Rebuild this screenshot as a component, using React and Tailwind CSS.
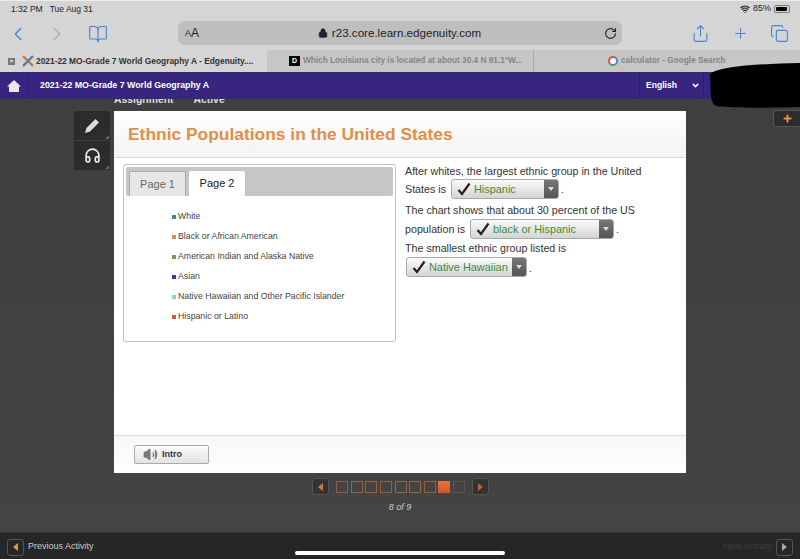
import React from "react";
import { Lock, RotateCw, Plus, ChevronLeft, ChevronRight, ChevronDown, BookOpen, Share, Copy, Wifi, Headphones, Volume2 } from "lucide-react";

const legend = [
  ["White", "bg-[#4c7f95]"],
  ["Black or African American", "bg-[#d98a45]"],
  ["American Indian and Alaska Native", "bg-[#7f9a57]"],
  ["Asian", "bg-[#5b2d8e]"],
  ["Native Hawaiian and Other Pacific Islander", "bg-[#8fd0cf]"],
  ["Hispanic or Latino", "bg-[#d9534f]"],
];

function Drop({ label, w }) {
  return (
    <span className={`inline-flex h-[20px] ${w} items-center rounded-[3px] border border-[#a9a9a9] bg-gradient-to-b from-[#fbfbfb] to-[#d4d4d4] overflow-hidden shrink-0`}>
      <svg width="14" height="14" viewBox="0 0 14 14" className="ml-[5px] shrink-0">
        <path d="M1.5 8 L5 12 L12.5 1.5" fill="none" stroke="#222" strokeWidth="2.2" />
      </svg>
      <span className="ml-[3px] text-[10.9px] leading-none text-[#3f8a37] flex-1 whitespace-nowrap">{label}</span>
      <span className="w-[14px] h-full bg-gradient-to-b from-[#777] to-[#555] flex items-center justify-center shrink-0">
        <span className="w-0 h-0 border-l-[3px] border-r-[3px] border-t-[4px] border-l-transparent border-r-transparent border-t-[#ddd]" />
      </span>
    </span>
  );
}

function Arrow({ dir, color, cls }) {
  return (
    <span className={`w-[17px] h-[17px] rounded-[3px] border border-[#555] bg-[#333] flex items-center justify-center ${cls || ""}`}>
      <span className={`w-0 h-0 border-t-[4px] border-b-[4px] border-t-transparent border-b-transparent ${dir === "l" ? "border-r-[5px]" : "border-l-[5px]"} ${color}`} />
    </span>
  );
}

function Corner() {
  return <span className="absolute right-[1px] bottom-[1px] w-0 h-0 border-l-[4px] border-b-[4px] border-l-transparent border-b-[#666]" />;
}

export default function App() {
  const font = { fontFamily: '"Liberation Sans", Arial, sans-serif' };
  return (
    <div className="relative w-[800px] h-[559px] overflow-hidden flex flex-col bg-[#424242]" style={font}>
      {/* status bar */}
      <div className="h-[17px] bg-[#d5d5d5] border-t border-[#ececec] flex items-center justify-between pl-[11px] pr-[10px] text-[8.5px] text-[#222] font-medium shrink-0">
        <div className="flex gap-[7px]"><span>1:32 PM</span><span>Tue Aug 31</span></div>
        <div className="flex items-center gap-[3px]">
          <Wifi size={10} strokeWidth={3} />
          <span className="text-[9px]">85%</span>
          <span className="w-[16px] h-[8px] rounded-[2px] border border-[#777] p-[1px] flex"><span className="w-[11px] bg-black rounded-[1px]" /></span>
        </div>
      </div>
      {/* toolbar */}
      <div className="h-[33px] bg-[#d5d5d5] flex items-center shrink-0">
        <ChevronLeft size={22} strokeWidth={1.6} className="ml-[7px] text-[#4a86d0]" />
        <ChevronRight size={22} strokeWidth={1.2} className="ml-[17px] text-[#a8a8a8]" />
        <BookOpen size={20} strokeWidth={1.4} className="ml-[20px] text-[#4a86d0]" />
        <div className="ml-[70px] w-[444px] h-[24px] -mt-[1px] rounded-[7px] bg-[#bebebe] flex items-center pl-[7px] pr-[3px] text-[#222]">
          <span className="text-[9px] leading-none mt-[1px]">A</span><span className="text-[12px] leading-none">A</span>
          <div className="flex-1 flex items-center justify-center gap-[4px] text-[11.6px] pr-[4px]">
            <Lock size={10} fill="#222" /><span>r23.core.learn.edgenuity.com</span>
          </div>
          <RotateCw size={13} className="mr-[2px]" />
        </div>
        <Share size={19} strokeWidth={1.4} className="ml-[69px] text-[#4a86d0]" />
        <Plus size={17} strokeWidth={1.4} className="ml-[22px] text-[#4a86d0]" />
        <Copy size={19} strokeWidth={1.4} className="ml-[21px] text-[#4a86d0]" />
      </div>
      {/* tabs */}
      <div className="h-[22px] flex text-[8.25px] font-bold shrink-0">
        <div className="w-[267px] bg-[#d5d5d5] flex items-center pl-[8px] text-[#333] text-[8.4px]">
          <span className="w-[7px] h-[7px] bg-[#777] text-white text-[6px] leading-[7px] text-center">×</span>
          <svg width="12" height="12" viewBox="0 0 12 12" className="ml-[7px]">
            <path d="M1 1 L11 11" stroke="#d9743a" strokeWidth="2.4" />
            <path d="M11 1 L1 11" stroke="#4d7fa8" strokeWidth="2.4" />
          </svg>
          <span className="ml-[2px] whitespace-nowrap">2021-22 MO-Grade 7 World Geography A - Edgenuity....</span>
        </div>
        <div className="w-[267px] bg-[#c6c6c6] border-r border-[#aaa] flex items-center pl-[22px] text-[#858585]">
          <span className="w-[11px] h-[10px] bg-black text-white text-[7px] leading-[10px] text-center">D</span>
          <span className="ml-[3px] whitespace-nowrap">Which Louisiana city is located at about 30.4 N 91.1°W...</span>
        </div>
        <div className="flex-1 bg-[#c6c6c6] flex items-center pl-[74px] text-[#858585]">
          <span className="w-[10px] h-[10px] rounded-full bg-white border-[2px] border-[#d9534f] border-r-[#4285f4] border-b-[#34a853]" />
          <span className="ml-[3px] whitespace-nowrap">calculator - Google Search</span>
        </div>
      </div>
      {/* purple bar */}
      <div className="h-[27px] bg-[#372580] flex items-center text-white text-[8.8px] font-bold shrink-0 z-10">
        <div className="w-[28px] h-full flex items-center justify-center border-r border-[#2f1f6e]">
          <svg width="14" height="14" viewBox="0 0 14 14"><path d="M7 1 L14 7.5 L12 7.5 L12 13 L2 13 L2 7.5 L0 7.5 Z" fill="#e8e8e8" /></svg>
        </div>
        <span className="ml-[12px]">2021-22 MO-Grade 7 World Geography A</span>
        <div className="ml-auto mr-[96px] w-[65px] h-full border-l border-r border-[#2f1f6e] flex items-center pl-[6px] gap-[14px] text-[8.6px]">
          <span>English</span><ChevronDown size={9} strokeWidth={4} />
        </div>
      </div>
      {/* main */}
      <div className="relative flex-1 flex bg-gradient-to-b from-[#3f3f3f] to-[#444]">
        <div className="absolute left-[114px] -top-[7px] flex gap-[20px] text-[10.4px] font-bold text-[#ddd]"><span>Assignment</span><span>Active</span></div>
        <div className="w-[114px] pt-[12px] pl-[74px] shrink-0">
          <div className="w-[36px] flex flex-col gap-[1px]">
            <div className="relative h-[29px] bg-[#2c2c2c] flex items-center justify-center">
              <svg width="18" height="18" viewBox="0 0 18 18"><path d="M2 16 L3.5 11 L12.5 2 L16 5.5 L7 14.5 Z" fill="#ddd" /></svg>
              <Corner />
            </div>
            <div className="relative h-[29px] bg-[#2c2c2c] flex items-center justify-center">
              <Headphones size={17} stroke="#eee" strokeWidth={2.4} />
              <Corner />
            </div>
          </div>
        </div>
        <div className="w-[572px] shrink-0 pt-[12px] flex flex-col items-center">
          <div className="w-full h-[362px] bg-white flex flex-col shrink-0">
            <div className="h-[47px] shrink-0 border-b border-[#d9d9d9] bg-gradient-to-b from-white to-[#f3f3f3] flex items-center pl-[14px] text-[17.4px] font-bold text-[#df8f47]">
              Ethnic Populations in the United States
            </div>
            <div className="flex-1 flex pl-[9px] pt-[6px]">
              <div className="w-[273px] h-[178px] rounded-[3px] border border-[#c0c0c0] p-[2px]">
                <div className="h-[29px] rounded-[2px] bg-[#c6c6c6] flex items-end pl-[3px] gap-[3px] text-[11px]">
                  <div className="w-[57px] h-[25px] bg-[#e6e6e6] border border-[#aaa] border-b-0 rounded-t-[2px] flex items-center justify-center text-[#666]">Page 1</div>
                  <div className="w-[56px] h-[25px] bg-white rounded-t-[2px] flex items-center justify-center text-[#222]">Page 2</div>
                </div>
                <div className="pl-[46px] pt-[15px] flex flex-col gap-[8px] text-[8.75px] text-[#444]">
                  {legend.map(([t, c]) => (
                    <div key={t} className="h-[12px] flex items-center gap-[2px] whitespace-nowrap">
                      <span className={`w-[4px] h-[4px] ${c}`} />{t}
                    </div>
                  ))}
                </div>
              </div>
              <div className="ml-[9px] w-[260px] -mt-[2px] text-[10.7px] text-[#333] flex flex-col">
                <div className="h-[19px] flex items-center whitespace-nowrap">After whites, the largest ethnic group in the United</div>
                <div className="h-[20px] -mt-[2px] flex items-center gap-[5px] whitespace-nowrap"><span>States is</span><Drop label="Hispanic" w="w-[108px]" /><span className="-ml-[3px]">.</span></div>
                <div className="h-[19px] mt-[2px] flex items-center whitespace-nowrap">The chart shows that about 30 percent of the US</div>
                <div className="h-[20px] -mt-[1px] flex items-center gap-[5px] whitespace-nowrap"><span>population is</span><Drop label="black or Hispanic" w="w-[144px]" /><span className="-ml-[3px]">.</span></div>
                <div className="h-[19px] flex items-center whitespace-nowrap">The smallest ethnic group listed is</div>
                <div className="h-[20px] flex items-center gap-[4px] whitespace-nowrap"><span className="ml-[1px]"><Drop label="Native Hawaiian" w="w-[121px]" /></span><span className="-ml-[2px]">.</span></div>
              </div>
            </div>
            <div className="h-[38px] shrink-0 border-t border-[#dcdcdc] bg-gradient-to-b from-[#f6f6f6] to-white pl-[20px] pt-[9px]">
              <div className="w-[75px] h-[19px] rounded-[2px] border border-[#aaa] bg-gradient-to-b from-[#fbfbfb] to-[#e3e3e3] flex items-center pl-[8px] gap-[4px] text-[9px] font-bold text-[#333]">
                <Volume2 size={15} fill="#777" stroke="#777" />Intro
              </div>
            </div>
          </div>
          <div className="mt-[5px] flex items-center pl-[1px]">
            <Arrow dir="l" color="border-r-[#d9743a]" />
            <div className="ml-[7px] flex gap-[2.67px]">
              {[1,2,3,4,5,6,7].map((i) => <span key={i} className="w-[12px] h-[12px] border border-[#9a5f40]" />)}
              <span className="w-[12px] h-[12px] bg-gradient-to-b from-[#e8743a] to-[#d9531e]" />
              <span className="w-[12px] h-[12px] border border-[#555]" />
            </div>
            <Arrow dir="r" color="border-l-[#a86a40]" cls="ml-[7px]" />
          </div>
          <div className="mt-[6px] text-[9px] italic text-[#ccc]">8 of 9</div>
        </div>
        <div className="flex-1 flex justify-end items-start pt-[11px]">
          <div className="w-[27px] h-[17px] rounded-l-[3px] bg-[#2c2c2c] border border-r-0 border-[#555] flex items-center justify-center"><Plus size={11} strokeWidth={4} className="text-[#e8953f]" /></div>
        </div>
      </div>
      {/* bottom bar */}
      <div className="h-[27px] bg-[#262626] border-t border-[#333] flex items-center justify-between pl-[7px] pr-[7px] pt-[2px] text-[9px] shrink-0">
        <div className="flex items-center gap-[4px] text-[#ccc]"><Arrow dir="l" color="border-r-[#e8953f]" cls="!bg-[#262626]" />Previous Activity</div>
        <div className="flex items-center gap-[4px] text-[#3f3f3f]">Next Activity<Arrow dir="r" color="border-l-[#aaa]" cls="!bg-[#262626]" /></div>
      </div>
      {/* overlays */}
      <svg className="absolute left-[708px] top-[62px] z-20" width="92" height="46" viewBox="0 0 92 46">
        <path d="M2 12 C12 4 50 2 92 1 L92 45 C60 46 24 46 8 44 C1 40 3 28 2 12 Z" fill="#000" />
      </svg>
      <div className="absolute left-[295px] top-[551px] w-[210px] h-[4px] rounded-full bg-white z-20" />
    </div>
  );
}
